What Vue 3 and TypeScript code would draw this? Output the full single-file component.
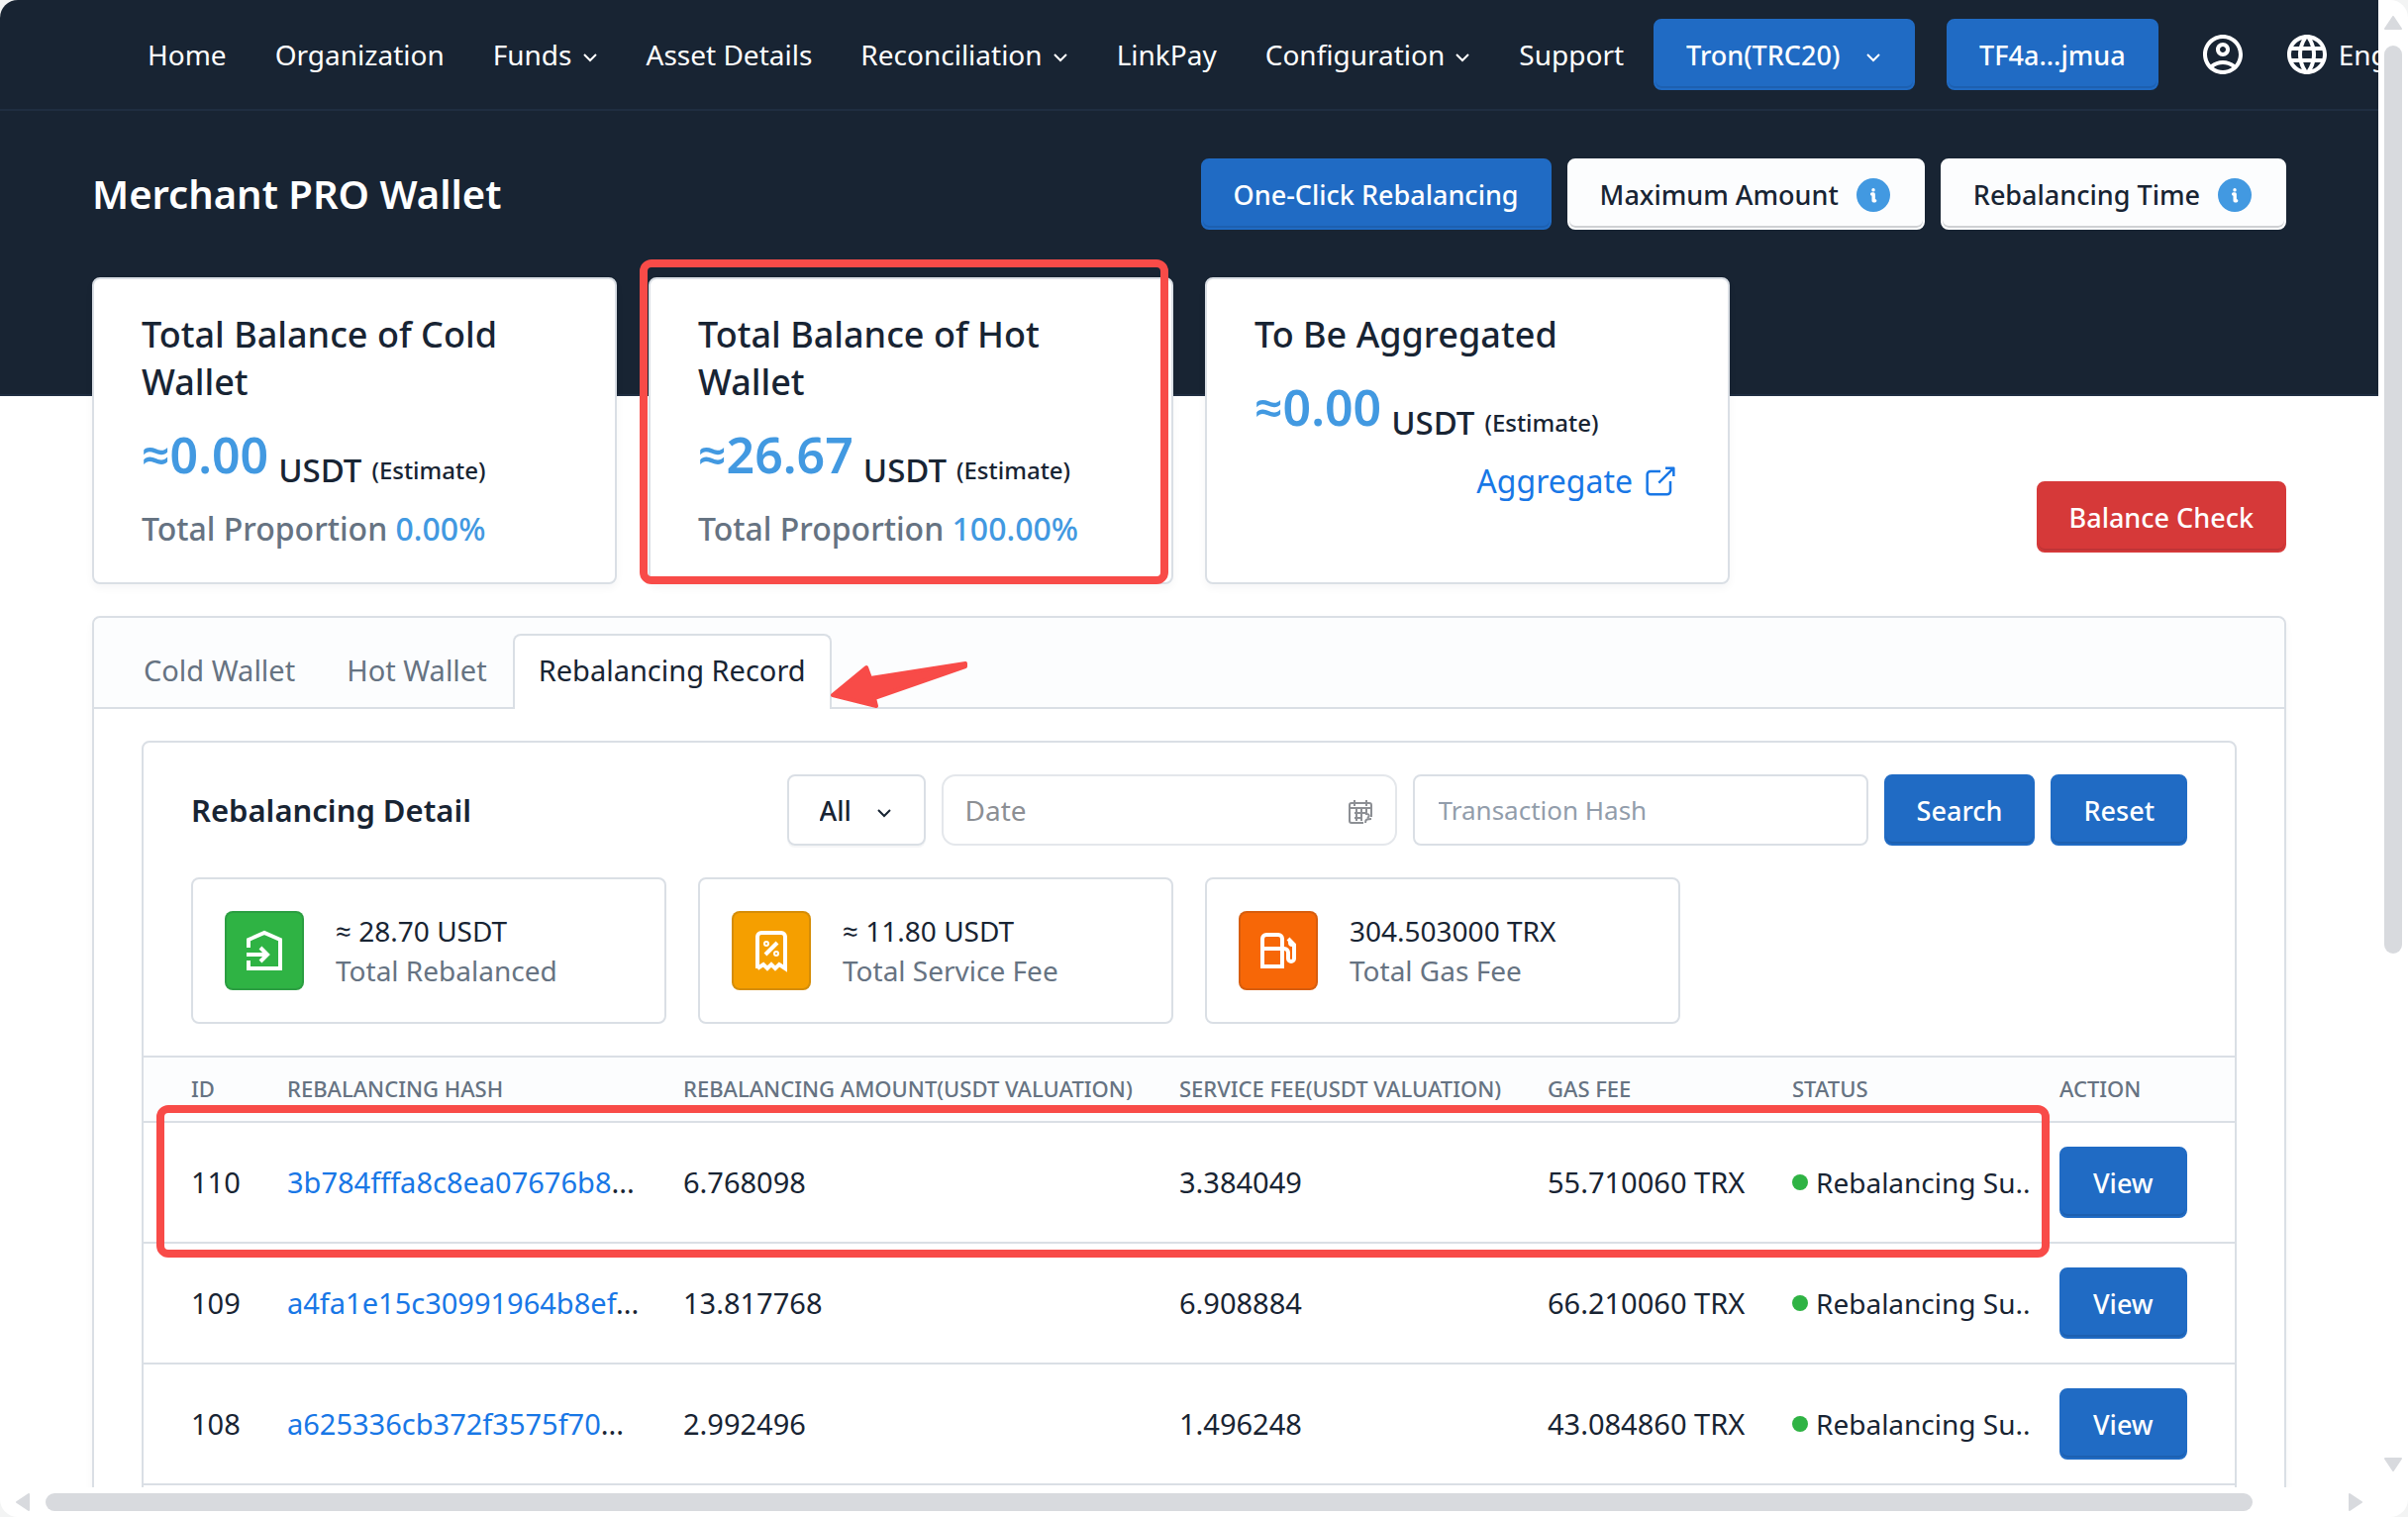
<script setup lang="ts">
import { ref } from 'vue'

interface NavItem { label: string; menu?: boolean }
interface Summary { title: string; value: string; proportion?: string }
interface RecordRow { id: number; hash: string; amount: string; fee: string; gas: string }

const navItems: NavItem[] = [
  { label: 'Home' },
  { label: 'Organization' },
  { label: 'Funds', menu: true },
  { label: 'Asset Details' },
  { label: 'Reconciliation', menu: true },
  { label: 'LinkPay' },
  { label: 'Configuration', menu: true },
  { label: 'Support' },
]

const summaries: Summary[] = [
  { title: 'Total Balance of Cold Wallet', value: '0.00', proportion: '0.00%' },
  { title: 'Total Balance of Hot Wallet', value: '26.67', proportion: '100.00%' },
  { title: 'To Be Aggregated', value: '0.00' },
]

const tabs = ['Cold Wallet', 'Hot Wallet', 'Rebalancing Record']
const activeTab = ref('Rebalancing Record')

const stats = [
  {
    tone: 'green', value: '≈ 28.70 USDT', label: 'Total Rebalanced',
    paths: ['M4 10.5V6.5L12 3l8 3.5V21H4v-4', 'M3 14h10', 'M10 10.5l3.5 3.5l-3.5 3.5'],
  },
  {
    tone: 'yellow', value: '≈ 11.80 USDT', label: 'Total Service Fee',
    paths: [
      'M5 21v-16a2 2 0 0 1 2 -2h10a2 2 0 0 1 2 2v16l-3 -2l-2 2l-2 -2l-2 2l-2 -2l-3 2',
      'M9 14l6 -6',
      'M9 8.5a.5 .5 0 1 0 1 0a.5 .5 0 1 0 -1 0',
      'M14 13.5a.5 .5 0 1 0 1 0a.5 .5 0 1 0 -1 0',
    ],
  },
  {
    tone: 'orange', value: '304.503000 TRX', label: 'Total Gas Fee',
    paths: [
      'M14 11h1a2 2 0 0 1 2 2v3a1.5 1.5 0 0 0 3 0v-7l-3 -3',
      'M4 20v-14a2 2 0 0 1 2 -2h6a2 2 0 0 1 2 2v14',
      'M3 20l12 0',
      'M18 7v1a1 1 0 0 0 1 1h1',
      'M4 11l10 0',
    ],
  },
]

const rows: RecordRow[] = [
  { id: 110, hash: '3b784fffa8c8ea07676b8', amount: '6.768098', fee: '3.384049', gas: '55.710060 TRX' },
  { id: 109, hash: 'a4fa1e15c30991964b8ef', amount: '13.817768', fee: '6.908884', gas: '66.210060 TRX' },
  { id: 108, hash: 'a625336cb372f3575f70', amount: '2.992496', fee: '1.496248', gas: '43.084860 TRX' },
]
</script>

<template>
  <div class="window">
    <div class="viewport">
      <header class="topbar">
        <nav class="nav">
          <a v-for="item in navItems" :key="item.label" class="nav-link" href="#">
            {{ item.label }}
            <svg v-if="item.menu" class="chevron" viewBox="0 0 16 16"><path d="M2 8l6 6l6-6" /></svg>
          </a>
        </nav>
        <div class="account">
          <label class="select primary chain">
            <select aria-label="Chain"><option>Tron(TRC20)</option></select>
            <svg class="chevron" viewBox="0 0 16 16"><path d="M2 8l6 6l6-6" /></svg>
          </label>
          <button class="btn primary" type="button">TF4a...jmua</button>
          <a class="icon-link" href="#" aria-label="Account">
            <svg viewBox="2 2 20 20"><path d="M12 2C6.48 2 2 6.48 2 12s4.48 10 10 10 10-4.48 10-10S17.52 2 12 2zM7.35 18.5C8.66 17.56 10.26 17 12 17s3.34.56 4.65 1.5c-1.31.94-2.91 1.5-4.65 1.5s-3.34-.56-4.65-1.5zm10.79-1.38C16.45 15.8 14.32 15 12 15s-4.45.8-6.14 2.12C4.7 15.73 4 13.95 4 12c0-4.42 3.58-8 8-8s8 3.58 8 8c0 1.95-.7 3.73-1.86 5.12zM12 6c-1.93 0-3.5 1.57-3.5 3.5S10.07 13 12 13s3.5-1.57 3.5-3.5S13.93 6 12 6zm0 5c-.83 0-1.5-.67-1.5-1.5S11.17 8 12 8s1.5.67 1.5 1.5S12.83 11 12 11z" /></svg>
          </a>
          <a class="icon-link" href="#">
            <svg viewBox="2 2 20 20"><path d="M11.99 2C6.47 2 2 6.48 2 12s4.47 10 9.99 10C17.52 22 22 17.52 22 12S17.52 2 11.99 2zm6.93 6h-2.95c-.32-1.25-.78-2.45-1.38-3.56 1.84.63 3.37 1.91 4.33 3.56zM12 4.04c.83 1.2 1.48 2.53 1.91 3.96h-3.82c.43-1.43 1.08-2.76 1.91-3.96zM4.26 14C4.1 13.36 4 12.69 4 12s.1-1.36.26-2h3.38c-.08.66-.14 1.32-.14 2s.06 1.34.14 2H4.26zm.82 2h2.95c.32 1.25.78 2.45 1.38 3.56-1.84-.63-3.37-1.9-4.33-3.56zm2.95-8H5.08c.96-1.66 2.49-2.93 4.33-3.56C8.81 5.55 8.35 6.75 8.03 8zM12 19.96c-.83-1.2-1.48-2.53-1.91-3.96h3.82c-.43 1.43-1.08 2.76-1.91 3.96zM14.34 14H9.66c-.09-.66-.16-1.32-.16-2s.07-1.35.16-2h4.68c.09.65.16 1.32.16 2s-.07 1.34-.16 2zm.25 5.56c.6-1.11 1.06-2.31 1.38-3.56h2.95c-.96 1.65-2.49 2.93-4.33 3.56zM16.36 14c.08-.66.14-1.32.14-2s-.06-1.34-.14-2h3.38c.16.64.26 1.31.26 2s-.1 1.36-.26 2h-3.38z" /></svg>
            <span>English</span>
          </a>
        </div>
      </header>

      <section class="hero">
        <h1>Merchant PRO Wallet</h1>
        <div class="hero-actions">
          <button class="btn primary" type="button">One-Click Rebalancing</button>
          <button v-for="label in ['Maximum Amount', 'Rebalancing Time']" :key="label" class="btn light" type="button">
            {{ label }}
            <svg class="info" viewBox="0 0 20 20">
              <circle cx="10" cy="10" r="10" />
              <path d="M9.2 9.4h.9v4h.9M10 6.9v.1" />
            </svg>
          </button>
        </div>
      </section>

      <main class="content">
        <section class="summary">
          <article v-for="(card, index) in summaries" :key="card.title" class="card">
            <h2>{{ card.title }}</h2>
            <p class="value">
              <strong>≈{{ card.value }}</strong>
              <span class="unit">USDT</span>
              <small>(Estimate)</small>
            </p>
            <p v-if="card.proportion" class="proportion">Total Proportion <b>{{ card.proportion }}</b></p>
            <p v-else class="aggregate">
              <a href="#">
                Aggregate
                <svg viewBox="0 0 24 24">
                  <path d="M12 6h-6a2 2 0 0 0 -2 2v10a2 2 0 0 0 2 2h10a2 2 0 0 0 2 -2v-6M11 13l9 -9M15 4h5v5" />
                </svg>
              </a>
            </p>
            <span v-if="index === 1" class="mark mark-card"></span>
          </article>
          <button class="btn danger" type="button">Balance Check</button>
        </section>

        <section class="panel">
          <div class="tabs" role="tablist">
            <button
              v-for="tab in tabs"
              :key="tab"
              class="tab"
              :class="{ active: tab === activeTab }"
              type="button"
              role="tab"
              :aria-selected="tab === activeTab"
              @click="activeTab = tab"
            >
              {{ tab }}
              <svg v-if="tab === 'Rebalancing Record'" class="arrow" viewBox="0 0 140 48">
                <path d="M3 34L37 6L41 17L137 2V5L45 37L47 45Z" />
              </svg>
            </button>
          </div>

          <div class="panel-body">
            <section class="detail">
              <div class="filters">
                <h3>Rebalancing Detail</h3>
                <label class="select plain">
                  <select aria-label="Type"><option>All</option></select>
                  <svg class="chevron" viewBox="0 0 16 16"><path d="M2 8l6 6l6-6" /></svg>
                </label>
                <label class="field date">
                  <input type="text" placeholder="Date" aria-label="Date">
                  <svg viewBox="0 0 26 26">
                    <path d="M7 1v6M19 1v6M16 24H4a2 2 0 0 1-2-2V6a2 2 0 0 1 2-2h18a2 2 0 0 1 2 2v12M2 9h22M7 14h13M7 19h8M9 10v12M14 10v12M18 24c0-4 2-4 6-4M19 10v5c3 0 4 2 1 4" />
                  </svg>
                </label>
                <label class="field">
                  <input type="text" placeholder="Transaction Hash" aria-label="Transaction Hash">
                </label>
                <button class="btn primary" type="button">Search</button>
                <button class="btn primary" type="button">Reset</button>
              </div>

              <div class="stats">
                <article v-for="stat in stats" :key="stat.label" class="stat">
                  <span class="stat-icon" :class="stat.tone">
                    <svg viewBox="0 0 24 24"><path v-for="d in stat.paths" :key="d" :d="d" /></svg>
                  </span>
                  <div>
                    <p>{{ stat.value }}</p>
                    <p class="muted">{{ stat.label }}</p>
                  </div>
                </article>
              </div>

              <div class="records">
                <table>
                  <colgroup>
                    <col class="c-id"><col class="c-hash"><col class="c-amount"><col class="c-fee">
                    <col class="c-gas"><col class="c-status"><col class="c-action">
                  </colgroup>
                  <thead>
                    <tr>
                      <th>ID</th>
                      <th>REBALANCING HASH</th>
                      <th>REBALANCING AMOUNT(USDT VALUATION)</th>
                      <th>SERVICE FEE(USDT VALUATION)</th>
                      <th>GAS FEE</th>
                      <th>STATUS</th>
                      <th>ACTION</th>
                    </tr>
                  </thead>
                  <tbody>
                    <tr v-for="row in rows" :key="row.id">
                      <td>{{ row.id }}</td>
                      <td><a href="#">{{ row.hash }}</a>...</td>
                      <td>{{ row.amount }}</td>
                      <td>{{ row.fee }}</td>
                      <td>{{ row.gas }}</td>
                      <td><span class="status"><i></i>Rebalancing Su..</span></td>
                      <td><button class="btn primary" type="button">View</button></td>
                    </tr>
                  </tbody>
                </table>
                <span class="mark mark-row"></span>
              </div>
            </section>
          </div>
        </section>
      </main>
    </div>

    <div class="scroll vertical" aria-hidden="true">
      <svg viewBox="0 0 18 14"><path d="M9 1L17 13H1Z" /></svg>
      <div class="track"><span></span></div>
      <svg viewBox="0 0 18 14"><path d="M1 1H17L9 13Z" /></svg>
    </div>
    <div class="scroll horizontal" aria-hidden="true">
      <svg viewBox="0 0 14 18"><path d="M13 1V17L1 9Z" /></svg>
      <div class="track"><span></span></div>
      <svg viewBox="0 0 14 18"><path d="M1 1L13 9L1 17Z" /></svg>
    </div>
  </div>
</template>

<style>
html,
body {
  margin: 0;
  background: #f3f4f4;
}
</style>

<style scoped>
.window {
  display: grid;
  grid-template: minmax(0, 1fr) 30px / minmax(0, 1fr) 30px;
  height: 100vh;
  overflow: hidden;
  border-radius: 18px;
  background: #fff;
  color: #182433;
  font: 400 28px/40px "Noto Sans", "Open Sans", sans-serif;
}

.window *,
.window *::before {
  box-sizing: border-box;
}

.viewport {
  overflow: hidden;
}

h1, h2, h3, p {
  margin: 0;
}

a {
  color: #1877e6;
  text-decoration: none;
}

svg {
  display: block;
  flex: none;
}

button, input, select {
  font: inherit;
  color: inherit;
}

.chevron {
  width: 16px;
  height: 16px;
  fill: none;
  stroke: currentColor;
  stroke-width: 2;
}

/* Top bar */
.topbar {
  display: flex;
  align-items: center;
  gap: 30px;
  height: 112px;
  padding-left: 149px;
  border-bottom: 2px solid #1f2e41;
  background: #182433;
  color: #fff;
  white-space: nowrap;
}

.nav {
  display: flex;
  gap: 49px;
}

.nav-link {
  display: flex;
  align-items: center;
  gap: 10px;
  color: #fff;
}

.account {
  display: flex;
  align-items: center;
  gap: 32px;
}

.icon-link {
  display: flex;
  align-items: center;
  gap: 12px;
  margin-left: 13px;
  color: #fff;
}

.icon-link svg {
  width: 40px;
  height: 40px;
  fill: #fff;
}

/* Buttons and selects */
.btn {
  display: inline-flex;
  flex: none;
  align-items: center;
  justify-content: center;
  gap: 18px;
  height: 72px;
  padding: 1px 31px 0;
  border: 2px solid transparent;
  border-radius: 8px;
  font-size: 27px;
  font-weight: 500;
  white-space: nowrap;
}

.primary {
  border-color: #206bc4;
  background: #206bc4;
  box-shadow: inset 0 -2px 0 #1d60b0;
  color: #fff;
}

.danger {
  border-color: #d63939;
  background: #d63939;
  box-shadow: inset 0 -2px 0 #bf3436;
  color: #fff;
}

.light {
  border-color: #fcfdfe;
  background: #fcfdfe;
  box-shadow: inset 0 -2px 0 #cfd1d4;
}

.info {
  width: 34px;
  height: 34px;
  margin-right: 2px;
  fill: #4299e1;
}

.info path {
  fill: none;
  stroke: #fff;
  stroke-width: 2;
  stroke-linecap: round;
  stroke-linejoin: round;
}

.select {
  position: relative;
  flex: none;
  height: 72px;
  border-width: 2px;
  border-style: solid;
  border-radius: 8px;
}

.select select {
  width: 100%;
  height: 100%;
  padding: 1px 31px 0;
  border: 0;
  outline: 0;
  background: transparent;
  font-size: 27px;
  font-weight: 500;
  appearance: none;
}

.select .chevron {
  position: absolute;
  top: 26px;
  right: 32px;
  pointer-events: none;
}

.chain {
  width: 264px;
}

.plain {
  width: 140px;
  border-color: #dadfe5;
  box-shadow: 0 2px 0 #f5f6f7;
}

/* Title band */
.hero {
  display: flex;
  align-items: center;
  justify-content: space-between;
  padding: 48px 93px 166px;
  border-bottom: 2px solid #1f2e41;
  background: #182433;
}

h1 {
  color: #fff;
  font-size: 40px;
  font-weight: 600;
  line-height: 56px;
}

.hero-actions {
  display: flex;
  gap: 16px;
}

.content {
  padding: 0 93px;
}

/* Balance cards */
.summary {
  display: flex;
  gap: 32px;
  margin: -120px 0 32px;
}

.card {
  position: relative;
  flex: 0 1 530px;
  padding: 32px 48px 30px;
  border: 2px solid #dadfe5;
  border-radius: 8px;
  background: #fff;
  box-shadow: 0 4px 8px rgba(24, 36, 51, .04);
}

h2 {
  font-size: 36px;
  font-weight: 500;
  line-height: 48px;
}

.value {
  display: flex;
  align-items: flex-end;
  gap: 10px;
  height: 100px;
  padding-bottom: 15px;
  font-weight: 500;
  line-height: 40px;
}

.value strong {
  margin-bottom: 4px;
  color: #4299e1;
  font-size: 50px;
  font-weight: 600;
  line-height: 64px;
}

.value .unit {
  font-size: 33px;
}

.value small {
  font-size: 24px;
}

.proportion {
  color: #667382;
  font-size: 32px;
  font-weight: 500;
  line-height: 48px;
}

.proportion b {
  color: #4299e1;
  font-weight: 500;
}

.aggregate {
  display: flex;
  justify-content: flex-end;
  font-size: 32px;
  line-height: 48px;
}

.aggregate a {
  display: flex;
  align-items: center;
  gap: 8px;
}

.aggregate svg {
  width: 40px;
  height: 40px;
  fill: none;
  stroke: currentColor;
  stroke-width: 1.5;
  stroke-linejoin: round;
}

.summary .danger {
  align-self: flex-end;
  margin: 0 0 32px auto;
}

/* Red highlight frames */
.mark {
  position: absolute;
  border: 8px solid #f84b48;
  border-radius: 12px;
  pointer-events: none;
}

.mark-card {
  inset: -20px 3px -2px -11px;
}

.mark-row {
  top: 48px;
  left: 13px;
  width: calc(100% - 200px);
  height: 154px;
}

/* Tabbed panel */
.panel {
  border: 2px solid #dadfe5;
  border-radius: 8px;
  box-shadow: 0 4px 8px rgba(24, 36, 51, .04);
}

.tabs {
  display: flex;
  padding: 16px 24px 0;
  border-bottom: 2px solid #dadfe5;
  border-radius: 8px 8px 0 0;
  background: #fcfdfe;
}

.tab {
  position: relative;
  height: 76px;
  margin-bottom: -2px;
  padding: 0 24px 4px;
  border: 2px solid transparent;
  border-bottom: 0;
  border-radius: 8px 8px 0 0;
  background: transparent;
  color: #667382;
  font-size: 29px;
}

.tab.active {
  border-color: #dadfe5;
  background: #fff;
  color: #182433;
}

.arrow {
  position: absolute;
  top: 26px;
  left: 100%;
  width: 140px;
  height: 48px;
  fill: #f84b48;
  stroke: #f84b48;
  stroke-width: 4;
  stroke-linejoin: round;
}

.panel-body {
  padding: 32px 48px;
}

.detail {
  padding-bottom: 64px;
  border: 2px solid #dadfe5;
  border-radius: 8px;
}

.filters {
  display: flex;
  align-items: center;
  gap: 16px;
  padding: 32px 48px;
}

h3 {
  flex: 1;
  font-size: 31px;
  font-weight: 600;
  line-height: 48px;
}

.field {
  position: relative;
  flex: 0 1 460px;
}

.field input {
  display: block;
  width: 100%;
  height: 72px;
  padding: 0 24px;
  border: 2px solid #dadfe5;
  border-radius: 8px;
  outline: 0;
  background: #fff;
  font-size: 26px;
}

.field input::placeholder {
  color: #929dab;
  opacity: 1;
}

.date input {
  padding: 0 22px;
  border-color: #e4e7eb;
  border-radius: 14px;
  font-size: 28px;
}

.date input::placeholder {
  color: #8c8f94;
}

.date svg {
  position: absolute;
  top: 25px;
  right: 24px;
  width: 26px;
  height: 26px;
  fill: none;
  stroke: #8c8f94;
  stroke-width: 2;
}

.stats {
  display: flex;
  gap: 32px;
  padding: 0 48px 32px;
}

.stat {
  display: flex;
  flex: 0 1 480px;
  gap: 32px;
  padding: 32px;
  border: 2px solid #dadfe5;
  border-radius: 8px;
}

.stat-icon {
  display: grid;
  place-items: center;
  width: 80px;
  height: 80px;
  border: 2px solid rgba(24, 36, 51, .14);
  border-radius: 8px;
}

.stat-icon svg {
  width: 48px;
  height: 48px;
  fill: none;
  stroke: #fff;
  stroke-width: 2;
}

.green { background-color: #2fb344; }
.yellow { background-color: #f59f00; }
.orange { background-color: #f76707; }
.muted { color: #667382; }

/* Record table */
.records {
  position: relative;
  border-top: 2px solid #dadfe5;
}

table {
  width: 100%;
  border-spacing: 0;
  table-layout: fixed;
}

.c-id { width: 129px; }
.c-hash { width: 400px; }
.c-amount { width: 501px; }
.c-fee { width: 372px; }
.c-gas { width: 247px; }
.c-status { width: 270px; }
.c-action { width: 193px; }

th, td {
  padding: 0 0 0 16px;
  border-bottom: 2px solid #dadfe5;
  text-align: left;
  white-space: nowrap;
}

th:first-child, td:first-child {
  padding-left: 48px;
}

th {
  height: 66px;
  padding-bottom: 2px;
  background: #fcfdfe;
  color: #667382;
  font-size: 22px;
  font-weight: 500;
  line-height: 32px;
}

td {
  height: 122px;
  font-size: 29px;
}

.status {
  display: flex;
  align-items: center;
  gap: 8px;
  font-size: 28px;
}

.status i {
  width: 16px;
  height: 16px;
  border-radius: 50%;
  background: #2fb344;
}

td .btn {
  padding: 1px 32px 0;
  vertical-align: middle;
}

/* Scroll bars */
.scroll {
  display: flex;
  align-items: center;
  gap: 16px;
}

.scroll svg {
  fill: #d8dade;
  stroke: #d8dade;
  stroke-width: 2;
  stroke-linejoin: round;
}

.scroll .track {
  display: flex;
  flex: 1;
}

.scroll span {
  border-radius: 9px;
  background: #d8dade;
}

.vertical {
  flex-direction: column;
  padding: 16px 0;
}

.vertical svg {
  width: 18px;
  height: 14px;
}

.vertical .track {
  flex-direction: column;
}

.vertical span {
  width: 18px;
  height: 65%;
}

.horizontal {
  padding: 0 16px;
}

.horizontal svg {
  width: 14px;
  height: 18px;
}

.horizontal span {
  width: 96.5%;
  height: 18px;
}
</style>
